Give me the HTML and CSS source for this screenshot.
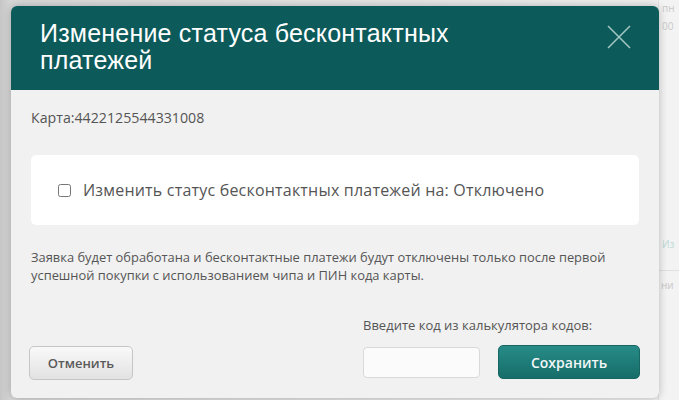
FILE: index.html
```html
<!DOCTYPE html>
<html lang="ru">
<head>
  <meta charset="UTF-8" />
  <title>Изменение статуса бесконтактных платежей</title>
  <link rel="stylesheet" href="styles.css">
</head>
<body>
  <!-- page behind the dialog -->
  <div class="backdrop">
    <span class="bg-text bg-top">пн</span>
    <span class="bg-text bg-time">00</span>
    <span class="bg-text bg-link">Из</span>
    <span class="bg-text bg-row">ни</span>
  </div>

  <div class="modal">
    <div class="modal-header">
      <h1>Изменение статуса бесконтактных платежей</h1>
      <button class="close" type="button" aria-label="Закрыть">
        <svg width="24" height="24" viewBox="0 0 24 24">
          <path d="M1 1 L23 23 M23 1 L1 23" stroke="#9fc4c1" stroke-width="1.6" fill="none" />
        </svg>
      </button>
    </div>

    <div class="modal-body">
      <div class="card-number">Карта:4422125544331008</div>

      <div class="status-box">
        <label class="status-label">
          <input type="checkbox" class="check">
          <span>Изменить статус бесконтактных платежей на: Отключено</span>
        </label>
      </div>

      <p class="note">Заявка будет обработана и бесконтактные платежи будут отключены только после первой успешной покупки с использованием чипа и ПИН кода карты.</p>

      <div class="footer">
        <button class="btn btn-cancel" type="button">Отменить</button>
        <div class="confirm">
          <div class="confirm-label">Введите код из калькулятора кодов:</div>
          <div class="confirm-row">
            <input type="text" class="code-input">
            <button class="btn btn-save" type="button">Сохранить</button>
          </div>
        </div>
      </div>
    </div>
  </div>
</body>
</html>
```

FILE: styles.css
```css
body {
  margin: 0;
  padding: 6px 0 0 11px;
  height: 400px;
  box-sizing: border-box;
  overflow: hidden;
  background: linear-gradient(to right, #c6c6c6 0, #d8d8d8 11px, #efefef 660px, #f4f4f4 100%);
  font-family: 'Open Sans', 'DejaVu Sans', sans-serif;
  color: #555;
  position: relative;
}

.backdrop {
  position: absolute;
  top: 0;
  right: 0;
  width: 20px;
  height: 400px;
  background: #f3f3f3;
  border-left: 1px solid #e2e2e2;
}

.bg-text {
  position: absolute;
  left: 3px;
  font-size: 10px;
  line-height: 12px;
  color: #c8c8c8;
}

.bg-top { top: 2px; }
.bg-time { top: 20px; }
.bg-link { top: 238px; color: #bcdad8; }
.bg-row {
  top: 270px;
  padding-top: 8px;
  border-top: 1px solid #e0e0e0;
  width: 18px;
  left: 0;
  padding-left: 2px;
}

.modal {
  position: relative;
  width: 648px;
  height: 392px;
  background: #f1f1f1;
  border-radius: 6px;
  box-shadow: 0 0 8px rgba(0, 0, 0, 0.25);
  overflow: hidden;
}

.modal-header {
  height: 84px;
  background: #0c5a5a;
  display: flex;
  justify-content: space-between;
  align-items: flex-start;
  padding: 14px 28px 0 29px;
  box-sizing: border-box;
}

.modal-header h1 {
  margin: 0;
  width: 460px;
  font-family: 'Liberation Sans', Arial, sans-serif;
  font-weight: normal;
  font-size: 25px;
  line-height: 27px;
  letter-spacing: 0.2px;
  color: #fff;
}

.close {
  background: none;
  border: none;
  padding: 0;
  margin-top: 5px;
  width: 24px;
  height: 24px;
  cursor: pointer;
}

.modal-body {
  padding: 0 19px 0 20px;
}

.card-number {
  margin-top: 18px;
  font-size: 14.2px;
  line-height: 20px;
  color: #555;
}

.status-box {
  margin-top: 27px;
  height: 70px;
  background: #fff;
  border-radius: 5px;
  display: flex;
  align-items: center;
  padding-left: 27px;
  margin-right: 1px;
}

.status-label {
  display: flex;
  align-items: center;
  font-size: 16px;
  color: #555;
  letter-spacing: 0.2px;
}

.check {
  width: 13px;
  height: 13px;
  margin: 0 12px 0 0;
}

.note {
  margin: 23px 0 0;
  font-size: 12.9px;
  line-height: 18px;
  color: #555;
}

.footer {
  margin-top: 32px;
  display: flex;
  justify-content: space-between;
  align-items: flex-end;
}

.confirm-label {
  font-size: 13px;
  line-height: 18px;
  color: #555;
  margin-bottom: 11px;
  padding-left: 1px;
}

.confirm-row {
  display: flex;
  align-items: center;
  gap: 18px;
}

.code-input {
  width: 117px;
  height: 31px;
  box-sizing: border-box;
  border: 1px solid #d9d9d9;
  border-radius: 4px;
  background: #fbfbfb;
  margin-left: 1px;
}

.btn {
  font-family: 'Open Sans', 'DejaVu Sans', sans-serif;
  border-radius: 5px;
  cursor: pointer;
  box-sizing: border-box;
  font-weight: 600;
}

.btn-cancel {
  width: 104px;
  height: 34px;
  margin-left: -2px;
  margin-bottom: -1px;
  background: linear-gradient(#f9f9f9, #e2e2e2);
  border: 1px solid #c6c6c6;
  color: #5a5a5a;
  font-size: 13px;
}

.btn-save {
  width: 142px;
  height: 34px;
  background: linear-gradient(#278b87, #166d69);
  border: 1px solid #166763;
  color: #f2f7f7;
  font-size: 14px;
}
```
